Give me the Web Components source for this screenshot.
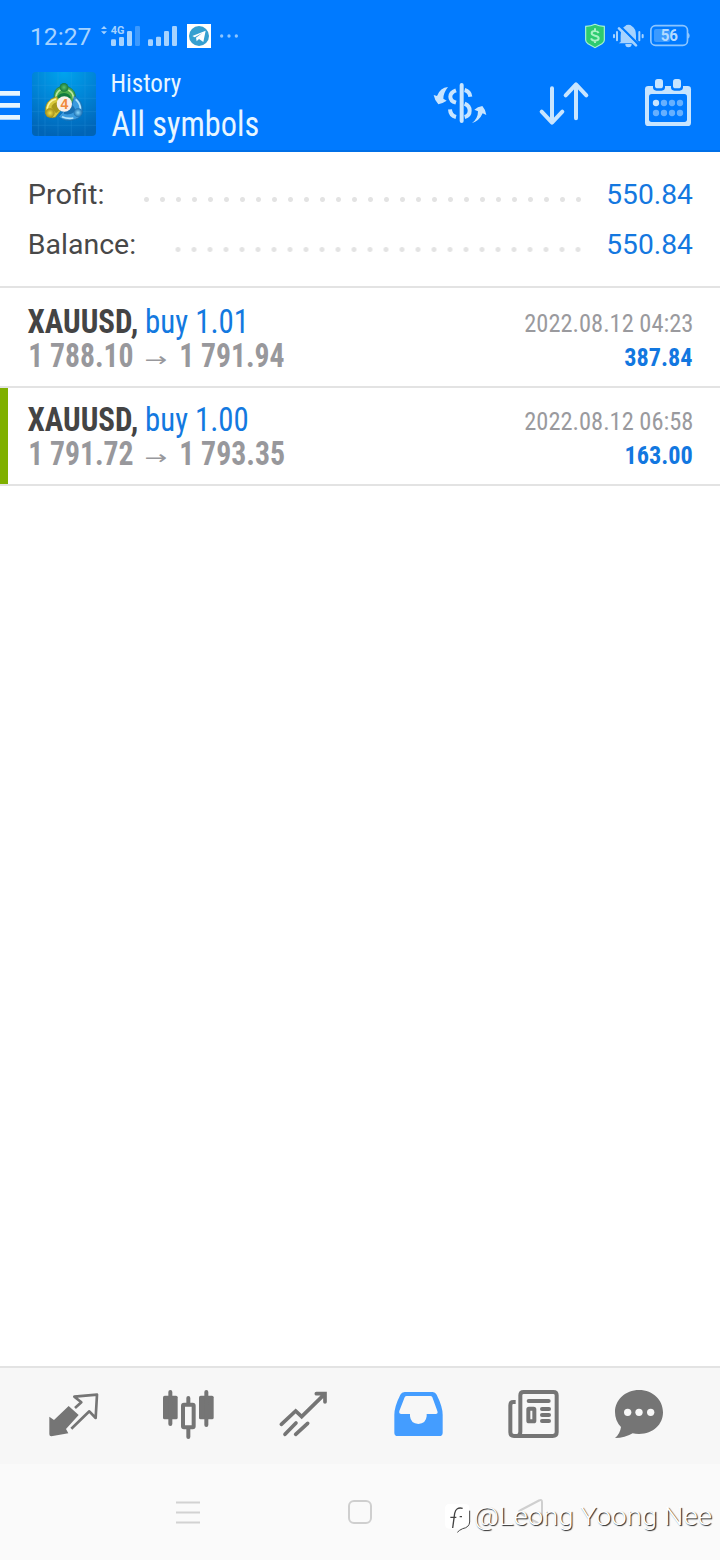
<!DOCTYPE html>
<html lang="en">
<head>
<meta charset="utf-8">
<title>History</title>
<style>
html,body{margin:0;padding:0;background:#fff}
body{width:720px;height:1560px;overflow:hidden;font-family:Roboto,"Liberation Sans",sans-serif}
</style>
</head>
<body>
<history-app></history-app>
<script>
const define = (name, html) => {
  const template = document.createElement('template');
  template.innerHTML = html;
  customElements.define(name, class extends HTMLElement {
    connectedCallback() {
      if (this.shadowRoot) return;
      this.attachShadow({ mode: 'open' }).append(template.content.cloneNode(true));
    }
  });
};

/* One line of text whose ink is condensed to a given width. */
const ctx = document.createElement('canvas').getContext('2d');
class FitText extends HTMLElement {
  connectedCallback() {
    if (this.shadowRoot) return;
    const root = this.attachShadow({ mode: 'open' });
    const w = +this.getAttribute('w'), size = +this.getAttribute('size');
    const lh = this.getAttribute('lh'), weight = this.getAttribute('weight') || 400;
    const family = this.getAttribute('family') || 'Roboto';
    const stretch = this.hasAttribute('wide') ? 'normal' : 'condensed';
    root.innerHTML = `<style>
      :host{display:block;flex:none;width:${w}px;height:${lh}px}
      span{display:inline-block;white-space:pre;font:${weight} ${stretch} ${size}px/${lh}px "${family}",sans-serif;transform-origin:0 0}
    </style><span></span>`;
    const span = root.querySelector('span');
    span.textContent = this.getAttribute('text');
    ctx.font = `${weight} ${stretch} ${size * 10}px "${family}", sans-serif`;
    const m = ctx.measureText(span.textContent);
    const left = m.actualBoundingBoxLeft / 10, right = m.actualBoundingBoxRight / 10;
    const k = w / (left + right);
    span.style.transform = `translateX(${left * k}px) scaleX(${k})`;
  }
}
customElements.define('fit-text', FitText);

define('status-bar', `
<style>
:host{display:flex;height:72px;box-sizing:border-box;padding-left:32px;color:#a6d3ff}
svg{display:block;flex:none}
.l{margin-left:9.500px}.r{margin-left:auto}
text{font-family:Roboto,sans-serif}
</style>
<fit-text wide text="12:27" size="24" lh="74" w="58.500" weight="450"></fit-text>
<svg class="l" width="150" height="72" viewBox="300 -30 450 216">
  <path d="M303 57L312 48L321 57ZM303 64L312 73L321 64Z" fill="#a6d3ff"/>
  <text x="332" y="72" font-size="34" font-weight="700" fill="#a6d3ff" textLength="41" lengthAdjust="spacingAndGlyphs">4G</text>
  <g fill="#a6d3ff"><rect x="333" y="88" width="15" height="20" rx="4"/><rect x="357" y="81" width="15" height="27" rx="4"/><rect x="381" y="63" width="15" height="45" rx="4"/><rect x="405" y="48" width="15" height="60" rx="4" fill="#3c9aff"/>
  <rect x="444" y="88" width="15" height="20" rx="4"/><rect x="468" y="80" width="15" height="28" rx="4"/><rect x="492" y="63" width="15" height="45" rx="4"/><rect x="516" y="48" width="15" height="60" rx="4"/></g>
  <rect x="561" y="42" width="72" height="72" fill="#fff"/><circle cx="597" cy="78" r="30" fill="#36a0d0"/>
  <path d="M577 78L617 62L610 96L597 87L590 94L588 83L607 69L584 82Z" fill="#fff"/>
  <g fill="#8cc5ff"><circle cx="665" cy="78" r="5"/><circle cx="687" cy="78" r="5"/><circle cx="709" cy="78" r="5"/></g>
</svg>
<svg class="r" width="140" height="72" viewBox="480 -30 420 216">
  <path d="M497 49Q513 49 525 43Q537 49 553 49V90Q553 97 546 101L525 113L504 101Q497 97 497 90Z" fill="#2ecb70" stroke="#a8f2d4" stroke-width="3.5"/>
  <path d="M525 55V62M525 92V99M536 69Q533 63 525 63Q515 63 515 70Q515 75 525 77Q536 79 536 85Q536 92 525 92Q516 92 513 85" fill="none" stroke="#a8f2c4" stroke-width="6"/>
  <g fill="#a6d3ff"><path d="M602 96L602 77Q602 55 616 48Q618 44 625 44Q632 44 635 48Q648 55 648 77V90L656 100H596Z"/><path d="M616 102H635Q635 112 625 112Q616 112 616 102Z"/></g>
  <path d="M600 48L658 106" stroke="#007aff" stroke-width="7"/><path d="M597 55L648 106" stroke="#a6d3ff" stroke-width="8" stroke-linecap="round"/>
  <path d="M591 66V91M582 75V82M658 66V91M668 75V82" stroke="#a6d3ff" stroke-width="6" stroke-linecap="round"/>
  <rect x="692.500" y="47" width="110" height="59" rx="14" fill="none" stroke="#8cc5ff" stroke-width="5"/>
  <path d="M803 68Q809 70 809 77Q809 84 803 86Z" fill="#8cc5ff"/><rect x="702" y="57" width="48" height="39" rx="6" fill="#3c9aff"/>
  <text x="722" y="93" font-size="47" font-weight="700" fill="#b4daff" textLength="52" lengthAdjust="spacingAndGlyphs">56</text>
</svg>`);

define('app-header', `
<style>
:host{display:flex;height:80px;box-sizing:border-box;border-bottom:2px solid #0070e8;color:#e8f6ff}
svg{display:block;flex:none}
.logo{margin-left:12px}
.titles{margin:-4px 0 0 16px;display:flex;flex-direction:column}
.actions{display:flex;gap:44px;margin:1px 22px 0 auto}
</style>
<svg width="20" height="64" viewBox="0 186 60 192"><path d="M0 243H60V257H0ZM0 279H60V293H0ZM0 315H60V329H0Z" fill="#e4f6ff"/></svg>
<svg class="logo" width="64" height="64" viewBox="12 12 192 192">
  <defs>
    <radialGradient id="bg" cx=".5" cy="0" r="1"><stop offset="0" stop-color="#00a4ee"/><stop offset=".5" stop-color="#0084d6"/><stop offset="1" stop-color="#0064b6"/></radialGradient>
    <radialGradient id="gr"><stop offset="0" stop-color="#5cc06c"/><stop offset="1" stop-color="#16793a"/></radialGradient>
    <radialGradient id="ye"><stop offset="0" stop-color="#f1e04c"/><stop offset="1" stop-color="#a08c18"/></radialGradient>
    <radialGradient id="bl"><stop offset="0" stop-color="#8ad6fa"/><stop offset="1" stop-color="#1a70b4"/></radialGradient>
  </defs>
  <rect x="12" y="12" width="192" height="192" rx="12" fill="url(#bg)"/>
  <path d="M31 12V204M51 12V204M90 12V204M130 12V204M171 12V204M12 52H204M12 91H204M12 131H204M12 172H204" stroke="#3ca4e8" stroke-width="1.5" opacity=".4"/>
  <path d="M78 92Q76 62 97 56H120Q145 66 143 96L120 112L92 100Z" fill="#4caa4c" stroke="#1d7440" stroke-width="2"/>
  <path d="M83 92Q84 72 98 65M121 66Q137 74 137 94" fill="none" stroke="#bce8a0" stroke-width="5"/>
  <path d="M88 88Q92 76 108 75Q126 76 129 90L109 100Z" fill="#127a40"/>
  <path d="M52 136Q48 96 86 86L100 112L96 130L82 148Q64 153 52 136Z" fill="#d8c83c" stroke="#8d8020" stroke-width="2"/>
  <path d="M58 122Q60 100 84 93" fill="none" stroke="#fbf4a0" stroke-width="5"/>
  <path d="M70 118Q74 104 88 103L96 126L84 136Z" fill="#a8981c"/>
  <path d="M139 84Q166 100 163 134Q156 154 128 157Q104 158 92 146L106 130L130 118Z" fill="#3a9ade" stroke="#1c66a4" stroke-width="2"/>
  <path d="M143 94Q157 106 157 122M102 146Q118 153 136 150" fill="none" stroke="#b4e4fc" stroke-width="5"/>
  <path d="M108 132L134 112Q145 124 139 132Q128 142 108 138Z" fill="#1870b4"/>
  <circle cx="108" cy="58" r="13" fill="url(#gr)"/><circle cx="66" cy="135" r="14" fill="url(#ye)"/><circle cx="150" cy="134" r="13" fill="url(#bl)"/>
  <circle cx="109" cy="108" r="23" fill="#f8f0ea"/>
  <text x="109" y="123" text-anchor="middle" font-family="Liberation Sans,sans-serif" font-weight="700" font-size="42" fill="#f08a3c">4</text>
</svg>
<div class="titles">
  <fit-text text="History" size="26.500" lh="29" w="69"></fit-text>
  <fit-text text="All symbols" size="34.500" lh="54" w="146"></fit-text>
</div>
<div class="actions">
  <svg width="60" height="60" viewBox="30 189 180 180" fill="none" stroke="#c8e5ff">
    <path d="M125 225V333" stroke-width="12" stroke-linecap="round"/>
    <path d="M108 241Q91 247 91 260Q91 273 108 278M90 298Q91 317 108 321M134 240Q149 244 151 260M134 281Q149 287 149 302Q149 317 134 321" stroke-width="12"/>
    <path d="M84 231Q61 232 51 258L41 255Q44 271 55 283Q68 280 80 272L70 266Q70 249 84 231ZM156 339Q174 326 174 304L163 299Q173 290 187 288Q197 299 199 315L188 310Q178 333 156 339Z" fill="#c8e5ff" stroke="none"/>
  </svg>
  <svg width="60" height="60" viewBox="342 189 180 180" fill="none" stroke="#c8e5ff" stroke-width="12" stroke-linecap="round" stroke-linejoin="round">
    <path d="M396 235V337M365 305L396 338L427 305M468 325V224M437 256L468 223L499 256"/>
  </svg>
  <svg width="60" height="60" viewBox="654 189 180 180">
    <rect x="675" y="228" width="138" height="120" rx="10" fill="#c8e5ff"/><rect x="687" y="252" width="114" height="84" rx="8" fill="#007aff"/>
    <rect x="699" y="201" width="36" height="41" rx="10" fill="#007aff"/><rect x="753" y="201" width="36" height="41" rx="10" fill="#007aff"/>
    <rect x="705" y="207" width="24" height="28" rx="8" fill="#c8e5ff"/><rect x="759" y="207" width="24" height="28" rx="8" fill="#c8e5ff"/>
    <circle cx="708" cy="279" r="9.500" fill="#c8e5ff"/>
    <g fill="#66b0ff"><circle cx="732" cy="279" r="9.500"/><circle cx="756" cy="279" r="9.500"/><circle cx="780" cy="279" r="9.500"/><circle cx="708" cy="309" r="9.500"/><circle cx="732" cy="309" r="9.500"/><circle cx="756" cy="309" r="9.500"/><circle cx="780" cy="309" r="9.500"/></g>
  </svg>
</div>`);

class SummaryRow extends HTMLElement {
  connectedCallback() {
    if (this.shadowRoot) return;
    const a = n => this.getAttribute(n);
    this.attachShadow({ mode: 'open' }).innerHTML = `
    <style>
    :host{display:flex;height:50px;color:#484848}
    .dots{flex:1;height:16px;margin:23px 0 0 40px;background:radial-gradient(circle at 8.500px 7.500px,#e3e3e3 2px,rgba(227,227,227,0) 3px) right top/16px 16px repeat-x}
    .v{color:#1478e0;margin:0 0 0 22px}
    </style>
    <fit-text wide text="${a('label')}" size="28.500" lh="51" w="${a('w')}"></fit-text><div class="dots"></div><fit-text wide class="v" text="${a('value')}" size="28.500" lh="51" w="84.500"></fit-text>`;
  }
}
customElements.define('summary-row', SummaryRow);

class DealRow extends HTMLElement {
  connectedCallback() {
    if (this.shadowRoot) return;
    const a = n => this.getAttribute(n);
    this.attachShadow({ mode: 'open' }).innerHTML = `
    <style>
    :host{display:flex;justify-content:space-between;height:98px;box-sizing:border-box;border-bottom:2px solid #e3e3e3;padding:14px 28px 0 28px}
    :host([marked]){background:linear-gradient(#7fb000,#7fb000) 0 0/8px 96px no-repeat}
    .line{display:flex;height:34px}
    .r{display:flex;flex-direction:column;align-items:flex-end}
    </style>
    <div><div class="line"><fit-text text="XAUUSD," size="33" lh="35" w="108.500" weight="700" style="color:#444"></fit-text>
    <fit-text text="${a('side')}" size="33" lh="35" w="${a('sw')}" style="color:#1379e0;margin-left:10px"></fit-text></div>
    <div class="line" style="color:#98989c;padding-left:1.500px"><fit-text text="${a('open')}" size="33" lh="35" w="102.500" weight="700"></fit-text>
    <fit-text text="→" size="19" lh="42" w="20" family="DejaVu Sans" style="margin-left:14px"></fit-text>
    <fit-text text="${a('close')}" size="33" lh="35" w="103" weight="700" style="margin-left:14.500px"></fit-text></div></div>
    <div class="r"><fit-text text="${a('time')}" size="26.500" lh="38" w="167" style="color:#9a9a9e;margin-right:.5px"></fit-text>
    <fit-text text="${a('profit')}" size="26.500" lh="30" w="${a('pw')}" weight="700" style="color:#1277e0"></fit-text></div>`;
  }
}
customElements.define('deal-row', DealRow);

define('tab-bar', `
<style>
:host{display:grid;grid-template-columns:repeat(5,115px) 95px;justify-items:center;align-items:center;padding:0 34px 4px 16px;height:98px;box-sizing:border-box;border-top:2px solid #e3e3e3;background:#f7f7f7}
svg{display:block}
</style>
<svg width="60" height="60" viewBox="72 72 180 180"><path d="M146 138L176 165L138 207L145 220L94 229Q88 229 88 223L88 170L102 180Z" fill="#757575"/><path d="M165 144L184 127L163 110L231 104L227 174L208 154L154 206" fill="none" stroke="#757575" stroke-width="8" stroke-linejoin="round"/></svg>
<svg width="60" height="60" viewBox="417 72 180 180"><g fill="#757575"><rect x="429" y="107" width="44" height="71" rx="5"/><rect x="537" y="107" width="44" height="71" rx="5"/></g><path d="M451 96V192M559 96V195M505 114V128M505 208V231" stroke="#757575" stroke-width="12" stroke-linecap="round"/><rect x="489" y="134" width="32" height="68" rx="3" fill="none" stroke="#757575" stroke-width="12"/></svg>
<svg width="60" height="60" viewBox="762 72 180 180"><path d="M784 193L827 153L845 170L913 103M889 101H915V126M795 223L828 189M827 223L863 190" fill="none" stroke="#757575" stroke-width="11" stroke-linecap="round"/></svg>
<svg width="60" height="60" viewBox="57 72 180 180"><path fill-rule="evenodd" d="M104 96H188Q196 96 200 104Q218 140 218 164V218Q218 228 208 228H83Q73 228 73 218V164Q73 140 91 104Q95 96 104 96ZM110 108Q106 108 104 112L88 153Q86 162 94 162H120V169Q122 191 145 192Q168 191 170 169V162H197Q205 162 202 153L187 112Q185 108 181 108Z" fill="#449dff"/></svg>
<svg width="60" height="60" viewBox="402 72 180 180"><g fill="none" stroke="#757575" stroke-width="12"><path d="M437 126H430Q421 126 421 136V217Q421 228 432 228H548Q560 228 560 217V106Q560 96 550 96H461Q451 96 451 106V215Q451 225 443 228"/><path d="M476 123H536M516 147H537M516 165H537M516 183H537" stroke-linecap="round"/><rect x="475" y="146" width="18" height="38" rx="2"/></g></svg>
<svg width="60" height="60" viewBox="717 72 180 180"><path d="M807 90C850 90 879 121 879 157C879 193 850 222 807 222Q796 222 788 220Q765 234 735 234Q750 222 753 201Q735 183 735 156C735 120 766 90 807 90Z" fill="#757575"/><g fill="#f7f7f7"><circle cx="773" cy="157" r="11"/><circle cx="807" cy="157" r="11"/><circle cx="842" cy="157" r="11"/></g></svg>`);

define('nav-bar', `
<style>
:host{display:flex;justify-content:center;align-items:center;gap:132px;height:96px;background:#fafafa}
svg{display:block}
</style>
<svg width="40" height="40" viewBox="0 0 40 40"><path d="M8 10.500H32M8 20.500H32M8 30.500H32" stroke="#d2d2d2" stroke-width="2"/></svg>
<svg width="40" height="40" viewBox="0 0 40 40"><rect x="9" y="9" width="22" height="22" rx="5" fill="none" stroke="#cfcfcf" stroke-width="2"/></svg>
<svg width="40" height="40" viewBox="0 0 40 40"><path d="M8 18.500L27 8.500Q30 7 30 10V30Q30 33 27 31.500L8 21.500Q5.500 20 8 18.500Z" fill="none" stroke="#cfcfcf" stroke-width="2"/></svg>`);

define('author-mark', `
<style>
:host{position:absolute;left:444px;top:1496px;display:flex;color:#fff}
svg{display:block;overflow:visible}
fit-text{text-shadow:1px 1px 1px #222;margin-left:1px}
</style>
<svg width="30" height="40" viewBox="42 48 90 120">
  <path d="M58 72H106Q118 72 118 84V126Q118 144 96 148Q90 150 82 156L85 146H58Q45 146 45 132V86Q45 72 58 72Z" fill="#fff"/>
  <path d="M119 92V126Q118 142 98 146Q88 150 82 157" fill="none" stroke="#444" stroke-width="3"/>
  <path d="M98 85Q78 80 74 100L68 144M61 112H79M89 110H96" fill="none" stroke="#444" stroke-width="4"/>
</svg>
<fit-text wide text="@Leong Yoong Nee" size="26.500" lh="40" w="236" weight="300"></fit-text>`);

define('history-app', `
<style>
:host{display:flex;flex-direction:column;position:relative;width:720px;height:1560px;background:#fff;overflow:hidden}
header{background:#007aff;height:152px}
.summary{box-sizing:border-box;height:136px;padding:17px 28px 0 29.500px;border-bottom:2px solid #e3e3e3}
main{flex:1;padding-top:2px}
</style>
<header><status-bar></status-bar><app-header></app-header></header>
<section class="summary">
  <summary-row label="Profit:" w="73" value="550.84"></summary-row>
  <summary-row label="Balance:" w="104.500" value="550.84"></summary-row>
</section>
<main>
  <deal-row side="buy 1.01" sw="97" open="1 788.10" close="1 791.94" time="2022.08.12 04:23" profit="387.84" pw="67"></deal-row>
  <deal-row marked side="buy 1.00" sw="100" open="1 791.72" close="1 793.35" time="2022.08.12 06:58" profit="163.00" pw="66"></deal-row>
</main>
<tab-bar></tab-bar>
<nav-bar></nav-bar>
<author-mark></author-mark>`);
</script>
</body>
</html>
